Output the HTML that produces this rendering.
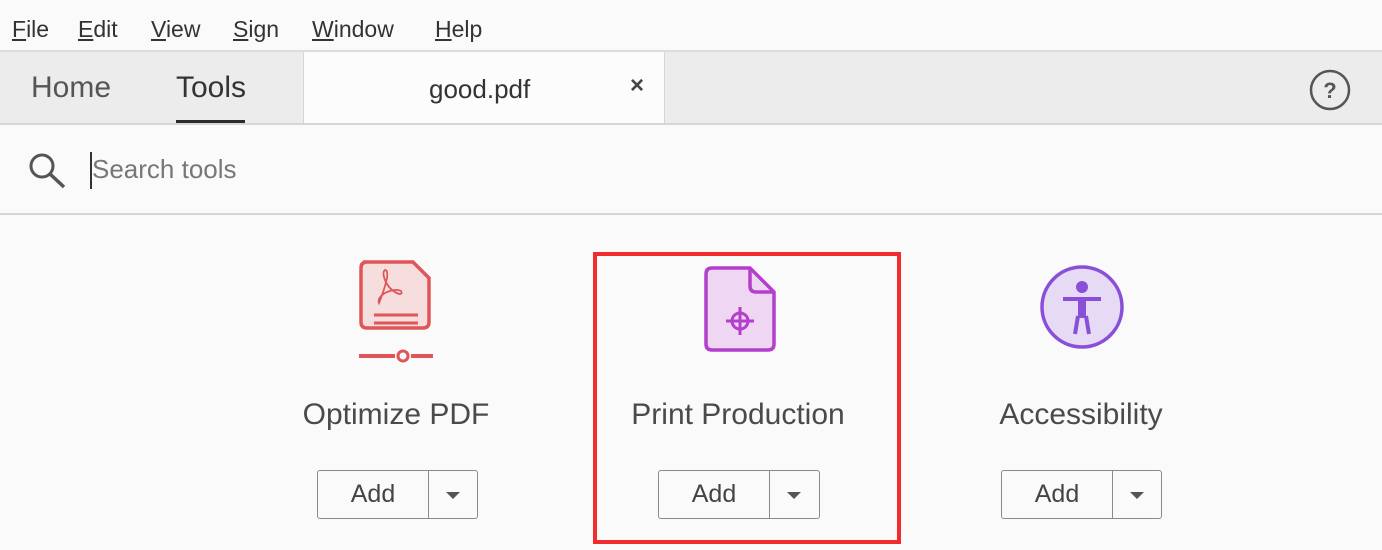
<!DOCTYPE html>
<html><head><style>
*{margin:0;padding:0;box-sizing:border-box}
body{width:1382px;height:550px;overflow:hidden;background:#fafafa;font-family:"Liberation Sans",sans-serif;position:relative;color:#4b4b4b}
.a{position:absolute}
.menu{top:0;left:0;width:1382px;height:52px;background:#fafafa;border-bottom:2px solid #dcdcdc}
.menu span{position:absolute;top:16px;font-size:23px;color:#333}
.tabs{top:52px;left:0;width:1382px;height:73px;background:#ececec;border-bottom:2px solid #d6d6d6}
.lbl{font-size:30px;color:#4a4a4a;white-space:nowrap;transform:translateX(-50%)}
.btn{height:49px;border:1.5px solid #8a8a8a;border-radius:3px;background:#fafafa}
.btn .t{position:absolute;left:0;top:9px;width:110px;text-align:center;font-size:25px;color:#444}
.btn .d{position:absolute;left:110px;top:0;bottom:0;border-left:1.5px solid #8a8a8a;width:49px}
.btn .d:after{content:"";position:absolute;left:17px;top:21px;border-left:7px solid transparent;border-right:7px solid transparent;border-top:7px solid #555}
</style></head><body>
<div class="a menu">
<span style="left:12px"><u>F</u>ile</span>
<span style="left:78px"><u>E</u>dit</span>
<span style="left:151px"><u>V</u>iew</span>
<span style="left:233px"><u>S</u>ign</span>
<span style="left:312px"><u>W</u>indow</span>
<span style="left:435px"><u>H</u>elp</span>
</div>
<div class="a tabs">
<div class="a" style="left:31px;top:19px;font-size:30px;color:#555">Home</div>
<div class="a" style="left:176px;top:19px;font-size:30px;color:#333">Tools</div>
<div class="a" style="left:176px;top:68px;width:69px;height:3px;background:#2a2a2a"></div>
<div class="a" style="left:303px;top:0;width:362px;height:71px;background:#fcfcfc;border-left:1px solid #d6d6d6;border-right:1px solid #d6d6d6"></div>
<div class="a" style="left:429px;top:22px;font-size:26px;color:#333">good.pdf</div>
<div class="a" style="left:630px;top:20px;font-size:24px;color:#444;font-weight:bold">×</div>
<svg class="a" style="left:1308px;top:16px" width="44" height="44"><circle cx="22" cy="22" r="19" fill="none" stroke="#555" stroke-width="2.5"/><text x="22" y="30" text-anchor="middle" font-size="22" font-family="Liberation Sans" fill="#555" font-weight="bold">?</text></svg>
</div>
<div class="a" style="left:0;top:125px;width:1382px;height:90px;background:#fafafa;border-bottom:2px solid #d6d6d6"></div>
<svg class="a" style="left:26px;top:150px" width="46" height="40"><circle cx="16" cy="16" r="11" fill="none" stroke="#555" stroke-width="3"/><line x1="24" y1="24" x2="38" y2="37" stroke="#555" stroke-width="3.5"/></svg>
<div class="a" style="left:90px;top:152px;width:2px;height:37px;background:#333"></div>
<div class="a" style="left:92px;top:154px;font-size:26px;color:#777">Search tools</div>

<svg class="a" style="left:355px;top:258px" width="82" height="108">
<path d="M8 4 H58 L74 20 V64 Q74 70 68 70 H12 Q6 70 6 64 V10 Q6 4 12 4Z" fill="#f6dede" stroke="#e05658" stroke-width="3.5"/>
<path d="M24 45 Q30 30 32 20 Q33 12 30 12 Q27 14 30 22 Q34 32 44 36 Q48 36 46 33 Q40 30 30 35 Q22 40 24 45Z" fill="none" stroke="#e05658" stroke-width="1.8"/>
<line x1="19" y1="57" x2="63" y2="57" stroke="#e05658" stroke-width="3"/>
<line x1="19" y1="65" x2="63" y2="65" stroke="#e05658" stroke-width="3"/>
<line x1="4" y1="98" x2="40" y2="98" stroke="#e05658" stroke-width="4"/>
<line x1="56" y1="98" x2="78" y2="98" stroke="#e05658" stroke-width="4"/>
<circle cx="48" cy="98" r="5" fill="#fafafa" stroke="#e05658" stroke-width="3"/>
</svg>
<svg class="a" style="left:702px;top:264px" width="78" height="92">
<path d="M10 4 H48 L72 28 V80 Q72 86 66 86 H10 Q4 86 4 80 V10 Q4 4 10 4Z" fill="#efd6f2" stroke="#b43fcc" stroke-width="3.5"/>
<path d="M48 4 V22 Q48 28 54 28 H72" fill="none" stroke="#b43fcc" stroke-width="3.5"/>
<circle cx="38" cy="57" r="8" fill="none" stroke="#b43fcc" stroke-width="3"/>
<line x1="24" y1="57" x2="52" y2="57" stroke="#b43fcc" stroke-width="3"/>
<line x1="38" y1="43" x2="38" y2="71" stroke="#b43fcc" stroke-width="3"/>
</svg>
<svg class="a" style="left:1038px;top:264px" width="88" height="88">
<circle cx="44" cy="43" r="40" fill="#e6daf5" stroke="#8a4fd8" stroke-width="3.5"/>
<circle cx="44" cy="23" r="6" fill="#8a4fd8"/>
<line x1="25" y1="35" x2="63" y2="35" stroke="#8a4fd8" stroke-width="4"/>
<path d="M40 52 L37 70 M48 52 L51 70" fill="none" stroke="#8a4fd8" stroke-width="4"/>
<rect x="40" y="34" width="8" height="20" fill="#8a4fd8"/>
</svg>

<div class="a lbl" style="left:396px;top:398px">Optimize PDF</div>
<div class="a lbl" style="left:738px;top:398px">Print Production</div>
<div class="a lbl" style="left:1081px;top:398px">Accessibility</div>

<div class="a btn" style="left:317px;top:470px;width:161px"><div class="t">Add</div><div class="d"></div></div>
<div class="a btn" style="left:658px;top:470px;width:162px"><div class="t">Add</div><div class="d"></div></div>
<div class="a btn" style="left:1001px;top:470px;width:161px"><div class="t">Add</div><div class="d"></div></div>

<div class="a" style="left:593px;top:252px;width:308px;height:292px;border:4px solid #f02c2c"></div>
</body></html>
